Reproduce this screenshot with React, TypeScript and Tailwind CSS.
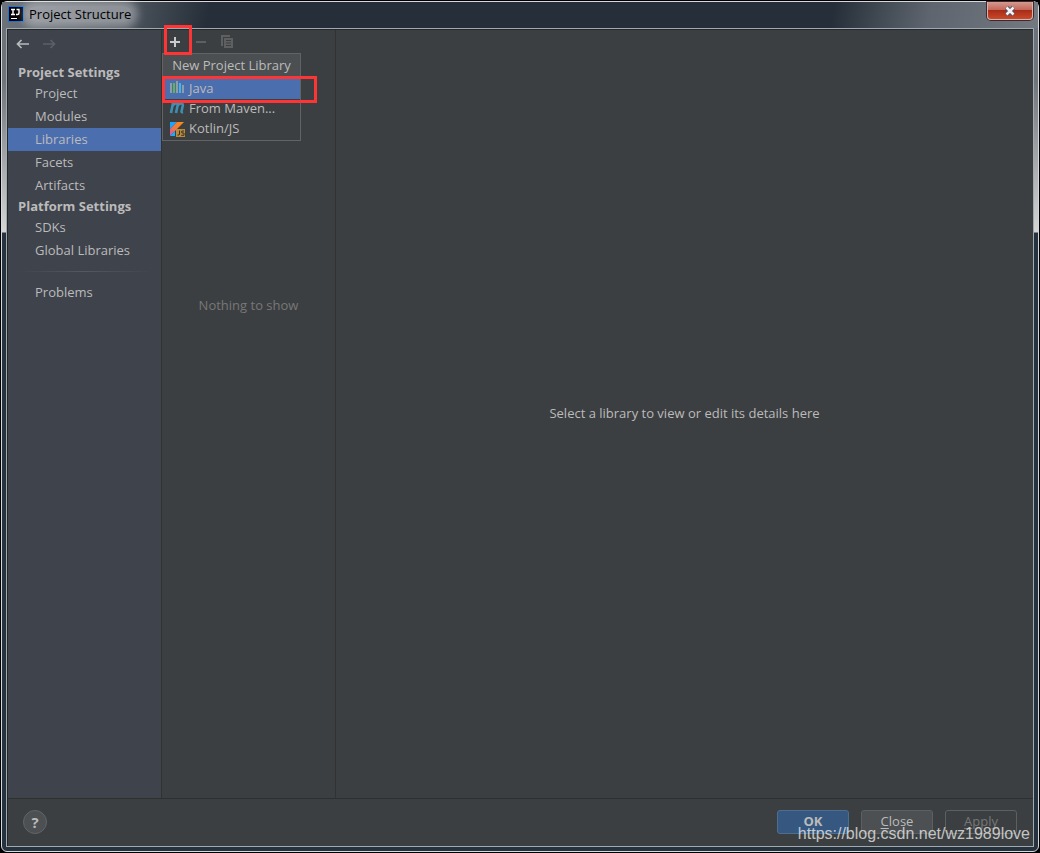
import { ReactNode } from "react";

const projectSettings = ["Project", "Modules", "Libraries", "Facets", "Artifacts"];
const platformSettings = ["SDKs", "Global Libraries"];

function NavItem({ label, active = false }: { label: string; active?: boolean }) {
    return (
        <button
            type="button"
            aria-current={active ? "page" : undefined}
            className={`block h-[23px] w-full pl-[27px] text-left ${active ? "bg-[#4b6eaf]" : ""}`}
        >
            {label}
        </button>
    );
}

function MenuItem({ icon, label, active = false }: { icon: ReactNode; label: string; active?: boolean }) {
    return (
        <button
            type="button"
            role="menuitem"
            className={`flex h-5 w-full items-center gap-1 pl-1.5 ${active ? "bg-[#4b6eaf]" : ""}`}
        >
            {icon}
            {label}
        </button>
    );
}

function AppIcon() {
    return (
        <svg width="16" height="16" viewBox="0 0 16 16" aria-hidden="true">
            <rect width="16" height="16" fill="#1472e8" />
            <rect x="1" y="1" width="14" height="14" fill="#000" />
            <path d="M3 3.500h4M5 3v6M3 8.500h4M8.500 3.500h3M11 3v4q0 1.500-1.500 1.500H8" stroke="#fff" strokeWidth="1.400" fill="none" />
            <path d="M3 12.500h6" stroke="#fff" strokeWidth="1" />
        </svg>
    );
}

function ArrowIcon({ flip = false }: { flip?: boolean }) {
    return (
        <svg width="14" height="10" viewBox="0 0 14 10" aria-hidden="true" className={flip ? "rotate-180" : ""}>
            <path d="M13 5H1.500M5.500 1L1.500 5l4 4" fill="none" stroke="currentColor" strokeWidth="1.700" />
        </svg>
    );
}

function JavaLibraryIcon() {
    return (
        <svg width="16" height="16" viewBox="0 0 16 16" aria-hidden="true">
            <path d="M1 2h2v10H1zM7 0h2v12H7zM13 4h2v8h-2z" fill="#8d9daa" />
            <path d="M4 2h2v10H4z" fill="#62b543" />
            <path d="M10 2h2v10h-2z" fill="#40b6e0" />
        </svg>
    );
}

function MavenIcon() {
    return (
        <svg width="16" height="16" viewBox="0 0 16 16" aria-hidden="true">
            <path
                d="M2 12L4 2M3.500 5Q5.500 2 7.500 2.500Q9 3 8.500 5L7 12M8.300 5Q10.500 2 12.500 2.500Q14.300 3 13.700 5L12.500 10.500Q12.300 11.500 14 11"
                fill="none"
                stroke="#3e8fb0"
                strokeWidth="2.600"
            />
        </svg>
    );
}

function KotlinJsIcon() {
    return (
        <svg width="16" height="16" viewBox="0 0 16 16" aria-hidden="true">
            <defs>
                <linearGradient id="kotlin" x1="0" y1="1" x2="1" y2="0">
                    <stop offset="0" stopColor="#c757bc" />
                    <stop offset="0.400" stopColor="#f0744b" />
                    <stop offset="1" stopColor="#fd8f0c" />
                </linearGradient>
            </defs>
            <path d="M1 1h7L1 8z" fill="#19a6ff" />
            <path d="M8 1h7L1 15V8z" fill="url(#kotlin)" />
            <path d="M1 15l5-5v5z" fill="#14b0ff" />
            <rect x="7" y="8" width="9" height="8" fill="#b98b3c" />
            <path
                d="M10.500 9.500V13q0 1.500-2 1M15 10h-2.200v2H15v2.300h-2.800"
                fill="none"
                stroke="#3c3220"
                strokeWidth="1"
            />
        </svg>
    );
}

function TitleBar() {
    return (
        <header className="flex h-[26px] items-start justify-between bg-[linear-gradient(100deg,#6d737b_0,#505760_120px,#262f39_205px,#262f39_820px,#5e656e_915px,#737981_100%)] pr-[5px] pl-1.5">
            <div className="flex items-start gap-1 pt-1">
                <AppIcon />
                <h1 className="rounded-full bg-white/35 px-px leading-4 text-black shadow-[0_0_8px_6px_rgba(255,255,255,0.350)]">
                    Project Structure
                </h1>
            </div>
            <button
                type="button"
                aria-label="Close window"
                className="flex h-[18px] w-[46px] items-center justify-center rounded-b-[4px] border border-t-0 border-[#d3b6b3] bg-[linear-gradient(#d39a90_0,#c4685a_45%,#a92c17_50%,#c84a2c_100%)] ring-1 ring-[#45242a]"
            >
                <svg width="12" height="10" viewBox="0 0 12 10" aria-hidden="true">
                    <path d="M2.500 1.500l7 7M9.500 1.500l-7 7" stroke="#50536b" strokeWidth="4.500" />
                    <path d="M2.500 1.500l7 7M9.500 1.500l-7 7" stroke="#f4f4f4" strokeWidth="2.500" />
                </svg>
            </button>
        </header>
    );
}

function Sidebar() {
    return (
        <nav className="w-[154px] shrink-0 border-r border-[#323232] bg-[#3f434c]">
            <div className="mb-[5px] flex h-7 items-center gap-3 px-2">
                <button type="button" aria-label="Back" className="text-[#b8babd]">
                    <ArrowIcon />
                </button>
                <button type="button" aria-label="Forward" disabled className="text-[#5d6065]">
                    <ArrowIcon flip />
                </button>
            </div>
            <h2 className="h-[19px] pl-2.5 leading-[19px] font-bold">Project Settings</h2>
            {projectSettings.map((label) => (
                <NavItem key={label} label={label} active={label === "Libraries"} />
            ))}
            <h2 className="h-[19px] pl-2.5 leading-[19px] font-bold">Platform Settings</h2>
            {platformSettings.map((label) => (
                <NavItem key={label} label={label} />
            ))}
            <hr className="mx-2 my-[9px] h-px border-0 bg-linear-to-r from-transparent via-[#55585d] to-transparent" />
            <NavItem label="Problems" />
        </nav>
    );
}

function LibraryList() {
    return (
        <section className="relative flex w-[174px] shrink-0 flex-col border-r border-[#323232]">
            <div className="flex h-6 items-center gap-2.5 pl-[5px]">
                <button type="button" aria-label="Add" className="text-[#c8cacc]">
                    <svg width="16" height="16" viewBox="0 0 16 16" aria-hidden="true">
                        <path d="M3 8h10M8 3v10" stroke="currentColor" strokeWidth="2" />
                    </svg>
                </button>
                <button type="button" aria-label="Remove" disabled className="text-[#5d5f60]">
                    <svg width="16" height="16" viewBox="0 0 16 16" aria-hidden="true">
                        <path d="M3 8h10" stroke="currentColor" strokeWidth="2" />
                    </svg>
                </button>
                <button type="button" aria-label="Copy" disabled className="text-[#5d5f60]">
                    <svg width="16" height="16" viewBox="0 0 16 16" aria-hidden="true">
                        <path d="M2 1h9v2H4v9H2z" fill="currentColor" />
                        <path d="M5 4h9v10H5zM7 6v1h5V6zM7 8.500v1h5v-1zM7 11v1h5v-1z" fill="currentColor" fillRule="evenodd" />
                    </svg>
                </button>
            </div>
            <p className="pt-[241px] text-center leading-5 text-[#777777]">Nothing to show</p>

            {/* New library popup */}
            <div role="menu" className="absolute top-[23px] left-0 w-[139px] border border-[#616365] bg-[#3c3f41] pb-px">
                <div className="mb-px h-6 bg-[#4b4f51] text-center leading-[22px]">New Project Library</div>
                <MenuItem icon={<JavaLibraryIcon />} label="Java" active />
                <MenuItem icon={<MavenIcon />} label="From Maven..." />
                <MenuItem icon={<KotlinJsIcon />} label="Kotlin/JS" />
            </div>

            {/* Highlight marks */}
            <div className="pointer-events-none absolute -top-[5px] left-0.5 h-[30px] w-7 border-3 border-[#ff3535]" />
            <div className="pointer-events-none absolute top-[46px] left-0 h-[27px] w-[155px] border-3 border-[#ff3535]" />
        </section>
    );
}

function Footer() {
    return (
        <footer className="flex h-12 items-start justify-between border-t border-[#2d2f30] pt-[11px] pr-4 pl-[15px]">
            <button
                type="button"
                aria-label="Help"
                className="size-6 rounded-full border border-[#616567] bg-[#4c5052] text-[15px] leading-5 font-bold"
            >
                ?
            </button>
            <div className="flex gap-3">
                <button type="button" className="h-6 w-[72px] rounded-[3px] border border-[#4c708c] bg-[#365880] font-bold">
                    OK
                </button>
                <button type="button" className="h-6 w-[72px] rounded-[3px] border border-[#5e6060] bg-[#4c5052]">
                    <span className="underline underline-offset-2">C</span>lose
                </button>
                <button type="button" disabled className="h-6 w-[72px] rounded-[3px] border border-[#5e6060] text-[#777777]">
                    <span className="underline underline-offset-2">A</span>pply
                </button>
            </div>
        </footer>
    );
}

export default function App() {
    return (
        <div className="relative flex h-screen flex-col bg-black p-px font-['Open_Sans',sans-serif] text-[13px] text-[#bbbbbb]">
            <div className="flex grow flex-col rounded-[6px] border border-[#d3d9de] bg-[linear-gradient(#6b7078_0,#70757c_80px,#d5d5d5_230px,#26333f_231px)]">
                <TitleBar />
                <div className="mx-1 mb-1 flex grow flex-col border border-[#a0a9ae]">
                    <div className="flex grow flex-col border-t border-l border-[#23282b] bg-[#3c3f41]">
                        <div className="flex grow">
                            <Sidebar />
                            <LibraryList />
                            <main className="flex grow items-center justify-center">
                                <p>Select a library to view or edit its details here</p>
                            </main>
                        </div>
                        <Footer />
                    </div>
                </div>
            </div>
            <div className="pointer-events-none absolute right-2.5 bottom-[7px] font-['Liberation_Sans',sans-serif] text-base text-white/70">
                https://blog.csdn.net/wz1989love
            </div>
        </div>
    );
}
